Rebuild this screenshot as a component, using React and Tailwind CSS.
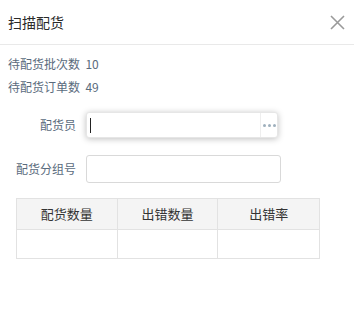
import React from "react";

const font = { fontFamily: '"Noto Sans CJK SC", "Noto Sans", sans-serif' };

const Cols = ["配货数量", "出错数量", "出错率"];

export default function App() {
  return (
    <div className="w-[354px] h-[314px] bg-white overflow-hidden" style={font}>
      {/* Header */}
      <div className="h-[45px] flex items-center justify-between pl-[8px] pr-[9px] border-b border-[#e9e9e9]">
        <span className="text-[14px] text-[#2a2a2a]">扫描配货</span>
        <svg width="15" height="15" viewBox="0 0 15 15" className="text-[#9a9a9a]">
          <path d="M1 1 L14 14 M14 1 L1 14" stroke="currentColor" strokeWidth="1.6" />
        </svg>
      </div>

      {/* Stats */}
      <div className="pt-[7px] pl-[8px] text-[12px] leading-[23px] text-[#5a6b7d]">
        <p>待配货批次数&nbsp; 10</p>
        <p>待配货订单数&nbsp; 49</p>
      </div>

      {/* Form */}
      <div className="mt-[14px] flex flex-col gap-[17px] pl-[16px]">
        <div className="flex items-center gap-[10px]">
          <label className="w-[60px] text-right text-[12px] text-[#5a6b7d]">配货员</label>
          <div className="w-[192px] h-[26px] bg-white rounded-[3px] border border-[#e6e6e6] shadow-[0_1px_6px_rgba(0,0,0,0.25)] flex items-center">
            <div className="flex-1 pl-[3px] flex items-center">
              <span className="w-[1px] h-[15px] bg-[#222]" />
            </div>
            <div className="w-[17px] h-full border-l border-[#eeeeee] flex items-center justify-center gap-[2px]">
              <span className="w-[3px] h-[3px] rounded-full bg-[#9fb0bd]" />
              <span className="w-[3px] h-[3px] rounded-full bg-[#9fb0bd]" />
              <span className="w-[3px] h-[3px] rounded-full bg-[#9fb0bd]" />
            </div>
          </div>
        </div>
        <div className="flex items-center gap-[10px]">
          <label className="w-[60px] text-right text-[12px] text-[#5a6b7d] whitespace-nowrap">配货分组号</label>
          <div className="w-[195px] h-[28px] bg-white rounded-[3px] border border-[#d9d9d9]" />
        </div>
      </div>

      {/* Table */}
      <div className="mt-[15px] ml-[16px] w-[304px] border border-[#e2e2e2]">
        <div className="grid grid-cols-3 h-[31px] bg-[#f4f4f4] border-b border-[#e2e2e2]">
          {Cols.map((c, i) => (
            <div
              key={c}
              className={`flex items-center justify-center text-[13px] text-[#333] ${i < 2 ? "border-r border-[#e2e2e2]" : ""}`}
            >
              {c}
            </div>
          ))}
        </div>
        <div className="grid grid-cols-3 h-[28px]">
          <div className="border-r border-[#e2e2e2]" />
          <div className="border-r border-[#e2e2e2]" />
          <div />
        </div>
      </div>
    </div>
  );
}
